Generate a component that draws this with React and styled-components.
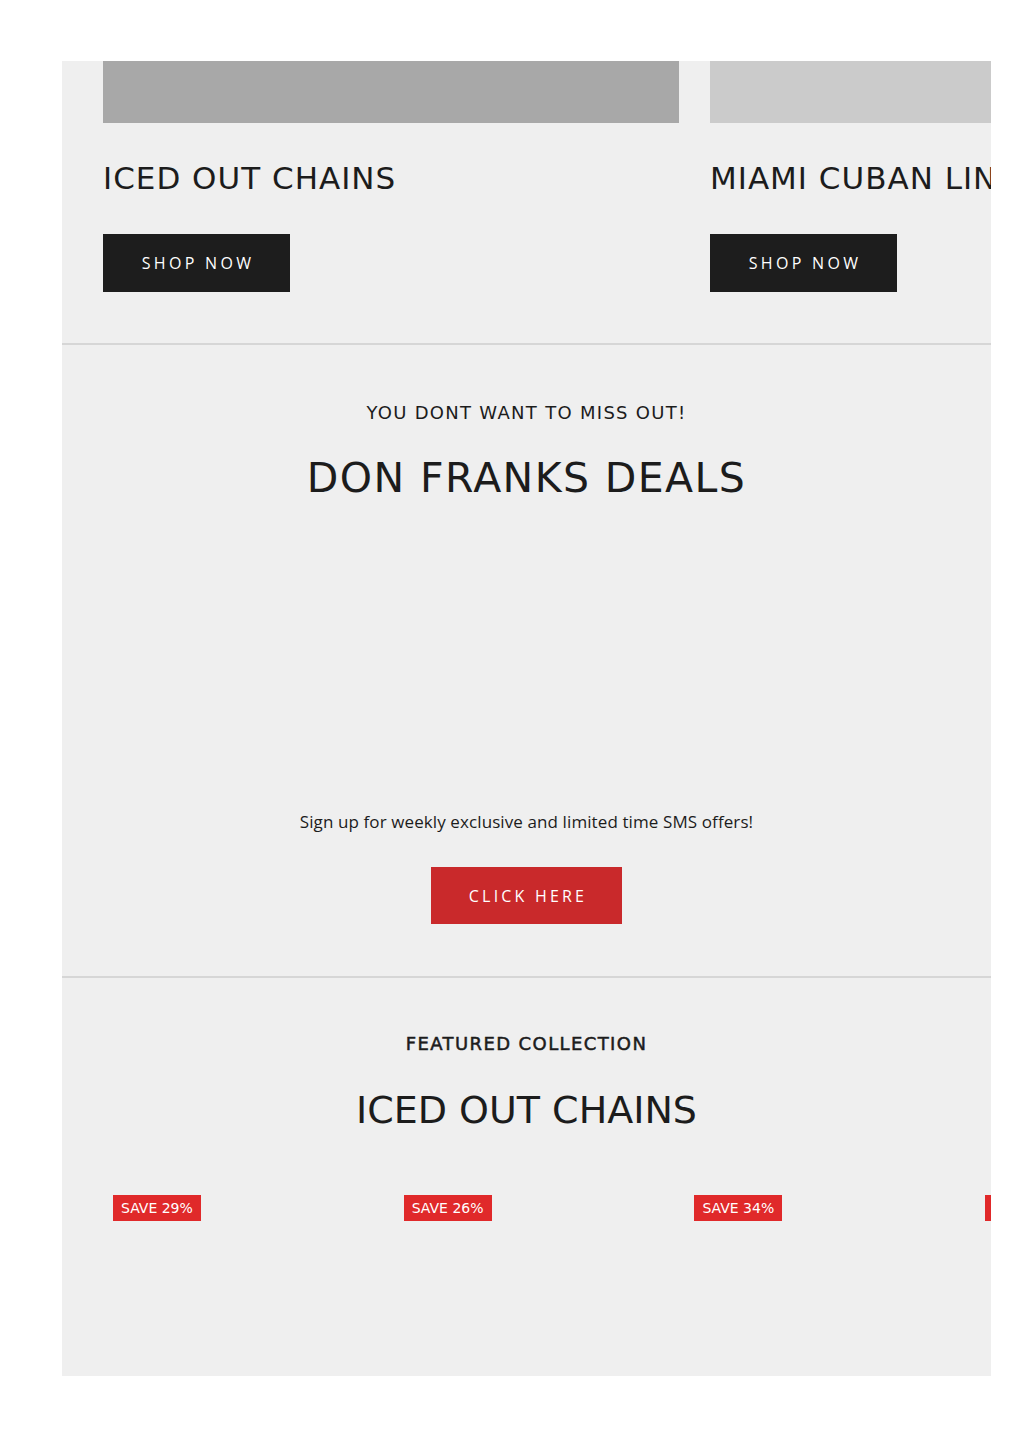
import styled, { createGlobalStyle } from "styled-components";

const GlobalStyle = createGlobalStyle`
  body {
    margin: 0;
    background: #ffffff;
    font-family: "Open Sans", "Liberation Sans", sans-serif;
  }
`;

const collections = [
  { id: 1, title: "ICED OUT CHAINS", tone: "#a8a8a8" },
  { id: 2, title: "MIAMI CUBAN LINK CHAINS", tone: "#cbcbcb" },
];

const products = [
  { id: 1, save: 29 },
  { id: 2, save: 26 },
  { id: 3, save: 34 },
  { id: 4, save: 31 },
];

export default function App() {
  return (
    <>
      <GlobalStyle />
      <Page>
        <Frame>
          <CollectionSection>
            <CollectionRow>
              {collections.map((item) => (
                <CollectionCard key={item.id}>
                  <CollectionImage $tone={item.tone} />
                  <CollectionTitle>{item.title}</CollectionTitle>
                  <DarkButton>SHOP NOW</DarkButton>
                </CollectionCard>
              ))}
            </CollectionRow>
          </CollectionSection>

          <DealsSection>
            <Kicker>YOU DONT WANT TO MISS OUT!</Kicker>
            <BigHeading $size={41} $spacing={1.4}>
              DON FRANKS DEALS
            </BigHeading>
            <Spacer />
            <Blurb>Sign up for weekly exclusive and limited time SMS offers!</Blurb>
            <RedButton>CLICK HERE</RedButton>
          </DealsSection>

          <FeaturedSection>
            <Kicker $medium>FEATURED COLLECTION</Kicker>
            <BigHeading $size={38} $spacing={0} $gap={29}>
              ICED OUT CHAINS
            </BigHeading>
            <ProductRow>
              {products.map((p) => (
                <ProductCard key={p.id}>
                  <SaveBadge>SAVE {p.save}%</SaveBadge>
                </ProductCard>
              ))}
            </ProductRow>
          </FeaturedSection>
        </Frame>
      </Page>
    </>
  );
}

const Page = styled.div`
  padding: 61px 33px 74px 62px;
`;

const Frame = styled.div`
  width: 929px;
  background: #efefef;
  overflow: hidden;
`;

const CollectionSection = styled.section`
  height: 282px;
  border-bottom: 2px solid #d6d6d6;
  padding-left: 41px;
  box-sizing: content-box;
`;

const CollectionRow = styled.div`
  display: flex;
  gap: 31px;
`;

const CollectionCard = styled.div`
  flex: 0 0 576px;
  display: flex;
  flex-direction: column;
  align-items: flex-start;
`;

const CollectionImage = styled.div`
  width: 100%;
  height: 62px;
  background: ${(p) => p.$tone};
`;

const CollectionTitle = styled.h3`
  margin: 35px 0 0;
  font-family: "DejaVu Sans", sans-serif;
  font-weight: 400;
  font-size: 31px;
  line-height: 40px;
  letter-spacing: 1px;
  color: #1c1c1c;
  white-space: nowrap;
`;

const DarkButton = styled.button`
  margin-top: 36px;
  width: 187px;
  height: 58px;
  border: 0;
  background: #1d1d1d;
  color: #ffffff;
  font-family: "Open Sans", sans-serif;
  font-size: 16px;
  letter-spacing: 3.3px;
  padding: 0 0 0 3px;
`;

const DealsSection = styled.section`
  height: 633px;
  border-bottom: 2px solid #d6d6d6;
  display: flex;
  flex-direction: column;
  align-items: center;
  padding-top: 56px;
  box-sizing: border-box;
`;

const Kicker = styled.p`
  margin: 0;
  font-family: "DejaVu Sans", sans-serif;
  font-size: 18px;
  line-height: 24px;
  font-weight: 400;
  letter-spacing: ${(p) => (p.$medium ? "1.4px" : "1.3px")};
  color: #1c1c1c;
  -webkit-text-stroke: ${(p) => (p.$medium ? "0.5px #1c1c1c" : "0")};
`;

const BigHeading = styled.h2`
  margin: ${(p) => p.$gap || 28}px 0 0;
  font-family: "DejaVu Sans", sans-serif;
  font-weight: 400;
  font-size: ${(p) => p.$size}px;
  line-height: 50px;
  letter-spacing: ${(p) => p.$spacing}px;
  color: #1c1c1c;
`;

const Spacer = styled.div`
  height: 306px;
`;

const Blurb = styled.p`
  margin: 0;
  font-family: "Open Sans", sans-serif;
  font-size: 17px;
  line-height: 26px;
  letter-spacing: 0.1px;
  color: #1c1c1c;
`;

const RedButton = styled.button`
  margin-top: 32px;
  width: 191px;
  height: 57px;
  border: 0;
  background: #c9292b;
  color: #ffffff;
  font-family: "Open Sans", sans-serif;
  font-size: 16px;
  letter-spacing: 3.2px;
  padding: 0 0 0 3px;
`;

const FeaturedSection = styled.section`
  height: 398px;
  display: flex;
  flex-direction: column;
  align-items: center;
  padding-top: 54px;
  box-sizing: border-box;
`;

const ProductRow = styled.div`
  align-self: stretch;
  display: flex;
  gap: 20px;
  padding-left: 41px;
  margin-top: 60px;
`;

const ProductCard = styled.div`
  flex: 0 0 270.7px;
  padding: 0 10px;
  box-sizing: border-box;
`;

const SaveBadge = styled.span`
  display: inline-block;
  background: #e0292a;
  color: #ffffff;
  font-family: "DejaVu Sans", sans-serif;
  font-size: 14px;
  line-height: 26px;
  padding: 0 8px;
`;
